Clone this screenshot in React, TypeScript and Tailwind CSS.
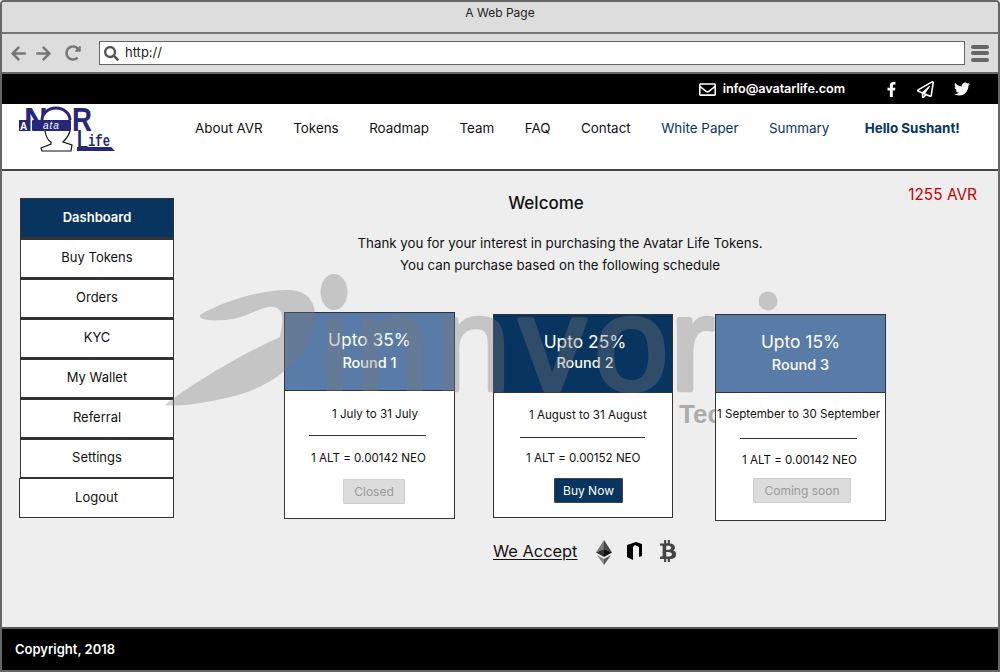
import React from "react";
import {
  FaArrowLeft, FaArrowRight, FaRedoAlt, FaSearch, FaRegEnvelope,
  FaFacebookF, FaRegPaperPlane, FaTwitter, FaBtc
} from "react-icons/fa";

const NavLinks = [
  { label: "About AVR", cls: "text-[#111]" },
  { label: "Tokens", cls: "text-[#111]" },
  { label: "Roadmap", cls: "text-[#111]" },
  { label: "Team", cls: "text-[#111]" },
  { label: "FAQ", cls: "text-[#111]" },
  { label: "Contact", cls: "text-[#111]" },
  { label: "White Paper", cls: "text-[#07355f]" },
  { label: "Summary", cls: "text-[#07355f]" },
];

const SideLinks = ["Dashboard", "Buy Tokens", "Orders", "KYC", "My Wallet", "Referral", "Settings", "Logout"];

const rounds = [
  {
    title: "Upto 35%", round: "Round 1", date: "1 July to 31 July", rate: "1 ALT = 0.00142 NEO", btn: "Closed",
    card: "w-[171px] h-[207px]", head: "bg-[#597ba8]", roundCls: "mt-[1px]",
    dateCls: "mt-[15px] ml-[47px]", line: "mt-[13px] ml-[24px] w-[117px]", rateCls: "mt-[14px] ml-[26px]",
    btnCls: "mt-[13px] ml-[58px] w-[62px] bg-[#dcdcdc] border-[#cfcfcf] text-[#999]",
  },
  {
    title: "Upto 25%", round: "Round 2", date: "1 August to 31 August", rate: "1 ALT = 0.00152 NEO", btn: "Buy Now",
    card: "w-[180px] h-[204px] mt-[2px]", head: "bg-[#07355f] pl-[4px]", roundCls: "-mt-[1px]",
    dateCls: "mt-[14px] ml-[35px]", line: "mt-[14px] ml-[26px] w-[125px]", rateCls: "mt-[12px] ml-[32px]",
    btnCls: "mt-[12px] ml-[60px] w-[69px] bg-[#07355f] border-[#444] text-white",
  },
  {
    title: "Upto 15%", round: "Round 3", date: "1 September to 30 September", rate: "1 ALT = 0.00142 NEO", btn: "Coming soon",
    card: "w-[171px] h-[207px] mt-[2px] ml-[4px] relative z-20", head: "bg-[#597ba8]", roundCls: "mt-[1px]",
    dateCls: "mt-[13px] ml-[1px]", line: "mt-[16px] ml-[24px] w-[117px]", rateCls: "mt-[13px] ml-[26px]",
    btnCls: "mt-[10px] ml-[37px] w-[98px] bg-[#dcdcdc] border-[#cfcfcf] text-[#999]",
  },
];

const Logo = () => (
  <svg width="110" height="52" viewBox="0 0 110 52" className="ml-[16px] mt-[3px] shrink-0 overflow-visible">
    <text x="6" y="24" fontFamily="Liberation Sans" fontWeight="700" fontSize="33" fill="#27277a">N</text>
    <path d="M24 13 A14 12 0 0 1 52 13" fill="#fff" stroke="#27277a" strokeWidth="3" />
    <path d="M27 24 C28 30 31 34 33 35 L33 37 L23 41 L24 44 L53 44 L54 38 L45 35 C48 32 51 28 52 24" fill="#fff" stroke="#111" strokeWidth="1.2" />
    <rect x="14" y="13" width="39" height="11" rx="1" fill="#27277a" />
    <rect x="1" y="13" width="9" height="11" fill="#27277a" />
    <text x="2" y="22.5" fontFamily="Liberation Sans" fontWeight="700" fontSize="10" fill="#fff">A</text>
    <text x="25" y="22" fontFamily="Liberation Sans" fontStyle="italic" fontSize="10" letterSpacing="1" fill="#fff">ata</text>
    <text x="54" y="24" fontFamily="Liberation Sans" fontWeight="700" fontSize="33" textLength="20" lengthAdjust="spacingAndGlyphs" fill="#27277a">R</text>
    <text x="59" y="42" fontFamily="Liberation Sans" fontWeight="700" fontSize="27" textLength="11" lengthAdjust="spacingAndGlyphs" fill="#27277a">L</text>
    <text x="70" y="39" fontFamily="Liberation Mono" fontWeight="700" fontSize="16" textLength="22" lengthAdjust="spacingAndGlyphs" fill="#27277a">ife</text>
    <path d="M59 40 H93 L97 44 H59Z" fill="#27277a" />
  </svg>
);

const Watermark = () => (
  <svg width="640" height="180" viewBox="0 0 640 180" className="absolute left-[158px] top-[92px] z-10 pointer-events-none opacity-[0.35]">
    <g transform="translate(-160,-263)" fill="#7a7a7a">
      <path d="M200 315 C225 300 265 289 290 290 C310 291 318 305 314 325 C308 355 280 385 230 397 C205 403 180 407 165 405 C190 385 240 355 280 337 C282 325 285 312 277 308 C265 302 250 318 225 320 C210 321 198 320 200 315Z" />
      <ellipse cx="334" cy="292" rx="13.5" ry="18" />
      <circle cx="768" cy="301" r="9.5" />
      <text x="320 355 436 519 594 670 752" y="390" fontFamily="Liberation Sans" fontSize="134" stroke="#7a7a7a" strokeWidth="4.5" strokeLinejoin="round">innvorı</text>
      <text x="679" y="423" fontFamily="Liberation Sans" fontWeight="700" fontSize="26" fill="#333">Tec</text>
    </g>
  </svg>
);

export default function App() {
  return (
    <div className="w-[1000px] h-[672px] flex flex-col border-2 border-[#666] rounded-t-[4px] overflow-hidden bg-[#eee] relative" style={{ fontFamily: "Inter, sans-serif" }}>
      {/* Browser chrome */}
      <div className="h-[32px] shrink-0 bg-[#ddd] border-b-2 border-[#777] text-center text-[12px] leading-[22px] text-[#222]">A Web Page</div>
      <div className="h-[40px] shrink-0 bg-[#ddd] border-b-2 border-[#666] flex items-center text-[#777]">
        <FaArrowLeft className="ml-[8px] w-[17px] h-[17px]" />
        <FaArrowRight className="ml-[8px] w-[17px] h-[17px]" />
        <FaRedoAlt className="ml-[13px] w-[16px] h-[16px]" />
        <div className="ml-[18px] w-[866px] h-[24px] bg-white border border-[#666] flex items-center">
          <FaSearch className="ml-[4px] w-[15px] h-[15px] text-[#555]" />
          <span className="ml-[6px] text-[13px] text-[#222]">http://</span>
        </div>
        <div className="ml-[6px] flex flex-col gap-[2.5px]">
          <div className="w-[18px] h-[4px] rounded-[2px] bg-[#666]" />
          <div className="w-[18px] h-[4px] rounded-[2px] bg-[#666]" />
          <div className="w-[18px] h-[4px] rounded-[2px] bg-[#666]" />
        </div>
      </div>

      {/* Top contact bar */}
      <div className="h-[30px] shrink-0 bg-black text-white flex items-center justify-end text-[12.7px] font-semibold">
        <FaRegEnvelope className="w-[17px] h-[17px]" />
        <span className="ml-[7px] tracking-[-0.1px]">info@avatarlife.com</span>
        <FaFacebookF className="ml-[39px] w-[15px] h-[15px]" />
        <FaRegPaperPlane className="ml-[18px] w-[17px] h-[17px]" />
        <FaTwitter className="ml-[20px] w-[16px] h-[16px] mr-[28px]" />
      </div>

      {/* Nav */}
      <div className="h-[67px] shrink-0 bg-white border-b-2 border-[#444] flex items-start">
        <Logo />
        <div className="ml-[67px] mt-[15px] flex gap-[30.5px] text-[13.4px] leading-[18px] whitespace-nowrap">
          {NavLinks.map((l) => (
            <span key={l.label} className={l.cls}>{l.label}</span>
          ))}
          <span className="ml-[5px] font-bold text-[#07355f]">Hello Sushant!</span>
        </div>
      </div>

      {/* Main area */}
      <div className="flex-1 flex relative">
        <Watermark />
        <div className="ml-[18px] mt-[27px] w-[154px] flex flex-col text-[13px]">
          {SideLinks.map((s, i) => (
            <div
              key={s}
              className={
                i === 0
                  ? "h-[40px] flex items-center justify-center bg-[#07355f] text-white font-semibold border border-[#333]"
                  : i === 7
                  ? "h-[40px] -ml-px flex items-center justify-center bg-white text-[#111] border border-[#333]"
                  : "h-[40px] pb-[1px] flex items-center justify-center bg-white text-[#111] border border-[#333] border-t-2"
              }
            >
              {s}
            </div>
          ))}
        </div>

        <div className="flex-1 flex flex-col">
          <div className="flex items-start">
            <div className="ml-[222px] w-[300px] mt-[20px] text-center text-[17px] leading-[24px] font-medium text-[#111]">Welcome</div>
            <div className="ml-auto mr-[21px] mt-[13px] text-[15.4px] leading-[22px] text-[#c80000]">1255 AVR</div>
          </div>
          <div className="ml-[186px] w-[400px] mt-[17px] text-center text-[13.3px] leading-[22px] text-[#111] whitespace-nowrap flex flex-col items-center">
            <span>Thank you for your interest in purchasing the Avatar Life Tokens.</span>
            <span>You can purchase based on the following schedule</span>
          </div>
          <div className="ml-[110px] mt-[36px] flex items-start gap-[38px]">
            {rounds.map((r) => (
              <div key={r.round} className={"border border-[#333] flex flex-col " + r.card}>
                <div className={"h-[78px] shrink-0 flex flex-col items-center pt-[15px] text-white border-b border-[#333] " + r.head}>
                  <div className="text-[17.4px] leading-[24px]">{r.title}</div>
                  <div className={"text-[14.5px] leading-[20px] font-medium " + r.roundCls}>{r.round}</div>
                </div>
                <div className="relative z-20 flex-1 bg-white flex flex-col items-start text-[11.6px] text-[#111] whitespace-nowrap">
                  <div className={"leading-[16px] " + r.dateCls}>{r.date}</div>
                  <div className={"h-px bg-[#333] " + r.line} />
                  <div className={"leading-[16px] " + r.rateCls}>{r.rate}</div>
                  <div className={"h-[25px] border rounded-[1px] flex items-center justify-center text-[12px] " + r.btnCls}>{r.btn}</div>
                </div>
              </div>
            ))}
          </div>
          <div className="ml-[319px] mt-[17px] flex items-center h-[26px]">
            <span className="text-[16.4px] leading-[20px] text-[#111] underline underline-offset-2">We Accept</span>
            <svg width="16" height="25" viewBox="0 0 16 25" className="ml-[19px] mt-[2px]">
              <polygon points="8,0 8,9 0,12.5" fill="#777" />
              <polygon points="8,0 8,9 16,12.5" fill="#444" />
              <polygon points="0,12.5 8,9 8,17" fill="#333" />
              <polygon points="16,12.5 8,9 8,17" fill="#111" />
              <polygon points="1,15 8,19 8,25" fill="#888" />
              <polygon points="15,15 8,19 8,25" fill="#555" />
            </svg>
            <svg width="16" height="18" viewBox="0 0 16 18" className="ml-[15px]">
              <path d="M0 3 L9 0 L15 2 L15 14 L12 15 L12 5 L8 3 L6 5 L6 18 L0 15Z" fill="#000" />
            </svg>
            <FaBtc className="ml-[15px] w-[20px] h-[22px] text-[#444]" />
          </div>
        </div>
      </div>

      {/* Footer */}
      <div className="h-[43px] shrink-0 bg-black border-t-2 border-[#555] flex items-center text-white text-[13px] font-semibold">
        <span className="ml-[13px]">Copyright, 2018</span>
      </div>
    </div>
  );
}
